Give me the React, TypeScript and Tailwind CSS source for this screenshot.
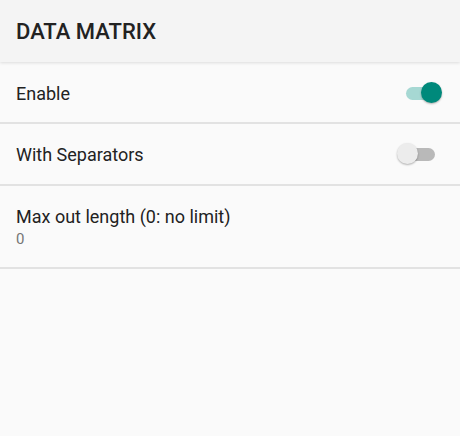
import { useState } from "react";

function Toggle({ on, onChange }: { on: boolean; onChange: () => void }) {
  return (
    <button
      type="button"
      onClick={onChange}
      className="relative h-[22px] w-[44px] shrink-0"
      aria-pressed={on}
    >
      <span
        className={
          on
            ? "absolute left-[9px] top-[5px] h-[13px] w-[33px] rounded-full bg-[#a6d8d3]"
            : "absolute left-[9px] top-[5px] h-[13px] w-[29px] rounded-full bg-[#b9b9b9]"
        }
      />
      <span
        className={
          on
            ? "absolute left-[24px] top-0 h-[21px] w-[21px] rounded-full bg-[#00897b] shadow-[0_1px_2px_rgba(0,0,0,0.3)]"
            : "absolute left-0 top-0 h-[21px] w-[21px] rounded-full bg-[#ececec] shadow-[0_1px_2px_rgba(0,0,0,0.3)]"
        }
      />
    </button>
  );
}

export default function App() {
  const [enable, setEnable] = useState(true);
  const [separators, setSeparators] = useState(false);

  return (
    <div className="min-h-[436px] bg-[#fafafa] font-['Roboto',sans-serif]">
      <header className="relative z-10 flex h-[62px] items-center bg-[#f4f4f4] px-4 pt-px shadow-[0_1px_3px_rgba(0,0,0,0.12)]">
        <h1 className="text-[22px] font-medium text-[#222]">DATA MATRIX</h1>
      </header>

      <div className="flex h-[62px] items-center justify-between border-b-2 border-[#e2e2e2] pl-4 pr-[19px] pt-[2px]">
        <span className="text-[18px] text-[#222]">Enable</span>
        <Toggle on={enable} onChange={() => setEnable(!enable)} />
      </div>

      <div className="flex h-[62px] items-center justify-between border-b-2 border-[#e2e2e2] pl-4 pr-[19px]">
        <span className="text-[18px] text-[#222]">With Separators</span>
        <Toggle on={separators} onChange={() => setSeparators(!separators)} />
      </div>

      <div className="flex h-[83px] flex-col justify-center border-b-2 border-[#e2e2e2] px-4">
        <span className="text-[18px] leading-6 text-[#222]">Max out length (0: no limit)</span>
        <span className="text-[15px] leading-5 text-[#757575]">0</span>
      </div>
    </div>
  );
}
